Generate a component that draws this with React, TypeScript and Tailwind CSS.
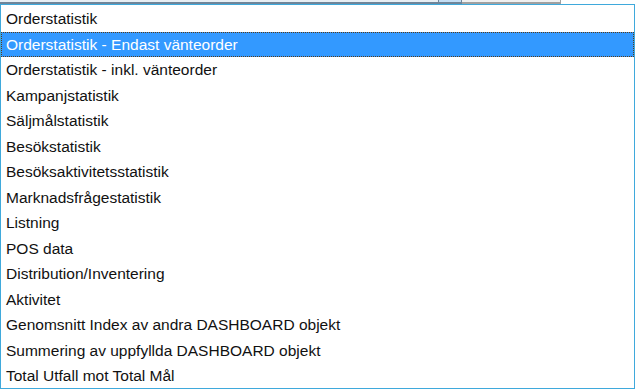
const items = [
  'Orderstatistik',
  'Orderstatistik - Endast vänteorder',
  'Orderstatistik - inkl. vänteorder',
  'Kampanjstatistik',
  'Säljmålstatistik',
  'Besökstatistik',
  'Besöksaktivitetsstatistik',
  'Marknadsfrågestatistik',
  'Listning',
  'POS data',
  'Distribution/Inventering',
  'Aktivitet',
  'Genomsnitt Index av andra DASHBOARD objekt',
  'Summering av uppfyllda DASHBOARD objekt',
  'Total Utfall mot Total Mål',
]

const selected = 1

export default function App() {
  return (
    <div className="w-[635px] h-[389px] bg-white overflow-hidden font-['Liberation_Sans',Arial,sans-serif]">
      {/* combobox bottom edge */}
      <div className="flex h-[4px]">
        <div className="w-[438px] border-b-2 border-[#6f8599] bg-[#e8eef3]" />
        <div className="w-[24px] border-b-2 border-x border-[#6f8599] bg-[#c3ddf3]" />
        <div className="w-[99px] border-b-2 border-r border-[#a0a0a0] bg-[#f0f0f0]" />
        <div className="flex-1 bg-white" />
      </div>

      {/* dropdown list */}
      <div className="h-[385px] border border-[#3fa9dc] pt-[1px]">
        {items.map((text, i) => (
          <div
            key={text}
            className={
              i === selected
                ? 'h-[25.5px] flex items-center pl-[4px] text-[15.5px] text-white bg-[#3399ff] border border-dotted border-[#5a3d1a]'
                : 'h-[25.5px] flex items-center pl-[5px] text-[15.5px] text-[#111]'
            }
          >
            {text}
          </div>
        ))}
      </div>
    </div>
  )
}
